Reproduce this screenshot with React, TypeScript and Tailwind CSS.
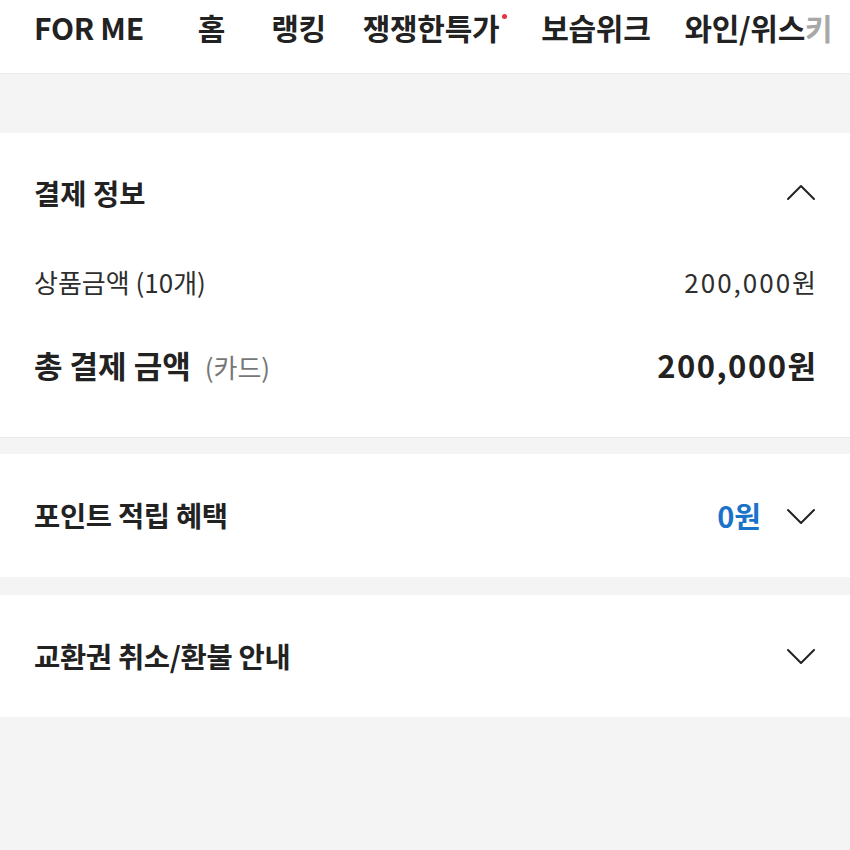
import React from 'react';

const font = { fontFamily: '"Noto Sans CJK KR", "Noto Sans", sans-serif' };

function Chevron({ up = false }: { up?: boolean }) {
  return (
    <svg width="30" height="18" viewBox="0 0 30 18" fill="none" className="shrink-0">
      <path
        d={up ? 'M2 15L15 2L28 15' : 'M2 3L15 16L28 3'}
        stroke="#222"
        strokeWidth={2}
        strokeLinecap="round"
        strokeLinejoin="round"
      />
    </svg>
  );
}

const tabs = [
  { label: '홈', cls: 'ml-[54px]' },
  { label: '랭킹', cls: 'ml-[46px]' },
  { label: '쟁쟁한특가', cls: 'ml-[37px]', dot: true },
  { label: '보습위크', cls: 'ml-[42px]' },
];

export default function App() {
  return (
    <div className="min-h-[850px] bg-[#f4f4f4] text-[#222]" style={font}>
      {/* 상단 탭 */}
      <div className="h-[74px] bg-white border-b border-[#ebebeb] flex items-start pt-[6px] pl-[34px] overflow-hidden whitespace-nowrap text-[30px] font-bold leading-[42px]">
        <span className="tracking-[-0.3px]">FOR ME</span>
        {tabs.map((t) => (
          <span key={t.label} className={`relative tracking-[-0.3px] ${t.cls}`}>
            {t.label}
            {t.dot && (
              <span className="absolute -right-[8px] top-[8px] w-[5px] h-[5px] rounded-full bg-[#e4343f]" />
            )}
          </span>
        ))}
        <span className="ml-[34px] tracking-[-0.3px]">
          와인/위스<span className="text-[#a8a8a8]">키</span>
        </span>
      </div>

      <div className="h-[59px]" />

      {/* 결제 정보 */}
      <section className="bg-white px-[34px] pt-[38px] pb-[50px]">
        <div className="flex items-center justify-between h-[44px]">
          <h2 className="text-[28.5px] font-bold">결제 정보</h2>
          <Chevron up />
        </div>
        <div className="flex items-center justify-between mt-[46px] h-[40px] text-[26px] text-[#2e2e2e]">
          <span>상품금액 (10개)</span>
          <span className="tracking-[2px] -mr-[2px]">200,000원</span>
        </div>
        <div className="flex items-center justify-between mt-[42px] h-[44px]">
          <span className="text-[31px] font-bold">
            총 결제 금액<span className="text-[26px] font-normal text-[#777] ml-[14px]">(카드)</span>
          </span>
          <span className="text-[31px] font-bold tracking-[1.5px] -mr-[1.5px]">200,000원</span>
        </div>
      </section>

      <div className="h-[17px] border-t border-[#ebebeb]" />

      {/* 포인트 적립 혜택 */}
      <section className="bg-white px-[34px] h-[123px] flex items-center justify-between">
        <h2 className="text-[28.5px] font-bold tracking-[-0.3px]">포인트 적립 혜택</h2>
        <div className="flex items-center gap-[25px]">
          <span className="text-[29px] font-bold text-[#1a73c9]">0원</span>
          <Chevron />
        </div>
      </section>

      <div className="h-[18px]" />

      {/* 교환권 취소/환불 안내 */}
      <section className="bg-white px-[34px] h-[122px] flex items-center justify-between">
        <h2 className="text-[28.5px] font-bold tracking-[-0.3px]">교환권 취소/환불 안내</h2>
        <Chevron />
      </section>
    </div>
  );
}
